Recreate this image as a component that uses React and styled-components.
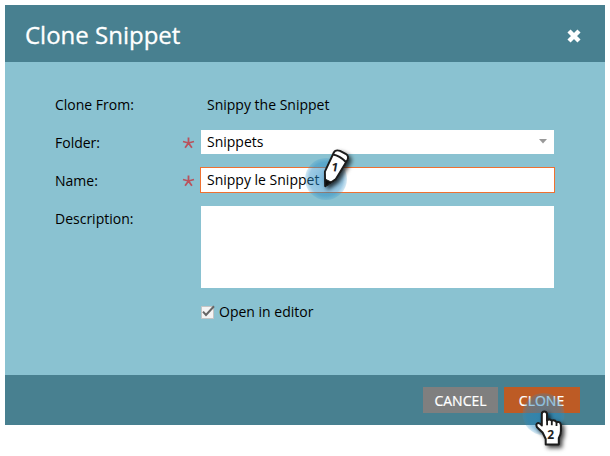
import React from "react";
import styled, { createGlobalStyle } from "styled-components";

const GlobalStyle = createGlobalStyle`
  * { box-sizing: border-box; }
  body { margin: 0; background: #fff; overflow: hidden; }
`;

const Page = styled.div`
  position: relative;
  height: 456px;
  padding: 5px;
  font-family: "Open Sans", "Noto Sans", sans-serif;
  font-size: 14px;
  line-height: 24px;
  color: #000;
`;

const Dialog = styled.section`
  display: flex;
  flex-direction: column;
  width: 600px;
  height: 420px;
  background: #8ac2d1;
`;

const Header = styled.header`
  display: flex;
  align-items: center;
  justify-content: space-between;
  height: 57px;
  padding: 4px 24px 0 20px;
  background: #488090;
`;

const Title = styled.h1`
  margin: -2px 0 0;
  color: #fff;
  font-size: 24px;
  font-weight: 400;
  line-height: 32px;
  -webkit-text-stroke: 0.3px #fff;
`;

const CloseButton = styled.button`
  display: flex;
  padding: 0;
  border: 0;
  background: none;
`;

const Form = styled.div`
  flex: 1;
  display: flex;
  flex-direction: column;
  gap: 14px;
  padding: 30px 51px 0 50px;
`;

const Row = styled.div`
  display: grid;
  grid-template-columns: 126px 20px 353px;
  grid-template-rows: 100%;
  height: ${(p) => (p.$tall ? 82 : 24)}px;
`;

const Label = styled.label`
  padding-top: 1px;
`;

const Required = styled.span`
  padding: 7px 0 0 1px;
  line-height: 0;
`;

const Value = styled.div`
  padding: 1px 6px;
`;

const Select = styled.div`
  display: flex;
  align-items: center;
  justify-content: space-between;
  padding: 0 7px 0 6px;
  background: #fff;

  svg {
    margin-bottom: 2px;
  }
`;

const Input = styled.div`
  padding: 0 6px;
  background: #fff;
  outline: 1px solid #ee7131;
`;

const TextArea = styled.div`
  background: #fff;
`;

const CheckRow = styled.label`
  display: flex;
  align-items: center;
  gap: 4px;
  height: 24px;
  margin: -2px 0 0 146px;
`;

const Footer = styled.footer`
  display: flex;
  justify-content: flex-end;
  gap: 6px;
  height: 50px;
  padding: 12px 25px;
  background: #488090;
`;

const Button = styled.button`
  width: ${(p) => (p.$primary ? 76 : 75)}px;
  height: 26px;
  padding: ${(p) => (p.$primary ? "1px 1px 0 0" : "1px 0 0")};
  border: 0;
  background: ${(p) => (p.$primary ? "#bd5b25" : "#7f7f7f")};
  color: #fff;
  font: 14px/25px "Open Sans", sans-serif;
  -webkit-text-stroke: 0.2px #fff;
`;

const Marker = styled.svg`
  position: absolute;
  left: ${(p) => p.$x}px;
  top: ${(p) => p.$y}px;
  overflow: visible;
`;

const MarkerNumber = styled.text`
  font: 700 12px "Open Sans", sans-serif;
  fill: #222;
  text-anchor: middle;
`;

const Asterisk = () => (
  <Required>
    <svg width="13" height="12" viewBox="0 0 13 12">
      <path
        d="M6.5 6V.6M6.5 6 1 4.5M6.5 6l5.5-1.5M6.5 6 3.1 10.7M6.5 6l3.4 4.7"
        stroke="#b9525c"
        strokeWidth="1.8"
        fill="none"
      />
    </svg>
  </Required>
);

const Defs = ({ id }) => (
  <defs>
    <radialGradient id={`${id}-glow`}>
      <stop offset="0" stopColor="#1f86c2" stopOpacity=".6" />
      <stop offset=".8" stopColor="#2489c4" stopOpacity=".45" />
      <stop offset="1" stopColor="#2f92cb" stopOpacity=".2" />
    </radialGradient>
    <filter id={`${id}-shadow`} x="-40%" y="-40%" width="200%" height="200%">
      <feDropShadow dx="2.5" dy="2.5" stdDeviation="2.2" floodOpacity=".75" />
    </filter>
  </defs>
);

const PencilMarker = () => (
  <Marker $x={304} $y={146} width="50" height="56">
    <Defs id="pencil" />
    <circle cx="22" cy="33" r="21" fill="url(#pencil-glow)" />
    <g filter="url(#pencil-shadow)" stroke="#1b1b1b" strokeLinejoin="round">
      <path
        d="M29.6 7Q31 3.4 36 4.8L41.6 7.8Q45.4 10.4 43.4 14L31.6 33.4 21.2 40.3 20.9 25.6Z"
        fill="#fff"
        strokeWidth="1.9"
      />
      <path d="M21 33 27.6 36.3 21.2 40.3Z" fill="#111" strokeWidth="1" />
      <path d="M29 8.5Q35.5 9.5 42 16" fill="none" strokeWidth="2.2" />
    </g>
    <MarkerNumber x="31" y="25.5" transform="rotate(10 31 21)">1</MarkerNumber>
  </Marker>
);

const HandMarker = () => (
  <Marker $x={522} $y={393} width="50" height="58">
    <Defs id="hand" />
    <circle cx="21.5" cy="21" r="21" fill="url(#hand-glow)" />
    <path
      filter="url(#hand-shadow)"
      d="M20.6 39.5 15 34.2Q13.4 31.2 15.6 30.2 17.4 29.6 19.8 32.4V21Q19.8 18.4 22.3 18.4 24.8 18.4 25 21V27.4Q27.3 25.2 29.7 27.6 32.4 26.2 34.6 29.2 38.2 27.9 38.9 32V38Q38.9 42 36.8 45V51.5H23.7V46Z"
      fill="#fff"
      stroke="#1b1b1b"
      strokeWidth="2"
      strokeLinejoin="round"
    />
    <path d="M25.1 27v5.2M29.8 27.5v4.7M34.5 29.2v3.8" stroke="#1b1b1b" strokeWidth="1.8" />
    <MarkerNumber x="28.8" y="45.7">2</MarkerNumber>
  </Marker>
);

export default function App() {
  return (
    <Page>
      <GlobalStyle />
      <Dialog>
        <Header>
          <Title>Clone Snippet</Title>
          <CloseButton aria-label="Close">
            <svg width="14" height="14" viewBox="0 0 14 14">
              <path d="M2 2l10 10M12 2 2 12" stroke="#fff" strokeWidth="4.4" />
            </svg>
          </CloseButton>
        </Header>
        <Form>
          <Row>
            <Label>Clone From:</Label>
            <span />
            <Value>Snippy the Snippet</Value>
          </Row>
          <Row>
            <Label>Folder:</Label>
            <Asterisk />
            <Select>
              Snippets
              <svg width="8" height="4" viewBox="0 0 8 4" overflow="visible">
                <path d="M0 0h8L4 4.5Z" fill="#999" />
              </svg>
            </Select>
          </Row>
          <Row>
            <Label>Name:</Label>
            <Asterisk />
            <Input>Snippy le Snippet</Input>
          </Row>
          <Row $tall>
            <Label>Description:</Label>
            <span />
            <TextArea />
          </Row>
          <CheckRow>
            <svg width="14" height="14" viewBox="0 0 14 14">
              <path d="M.5 1.5h12v12H.5Z" fill="#f4f4f4" stroke="#c5c5c5" />
              <path d="M2 6.7 5 10 13 1.3" fill="none" stroke="#666" strokeWidth="2" />
            </svg>
            Open in editor
          </CheckRow>
        </Form>
        <Footer>
          <Button>CANCEL</Button>
          <Button $primary>CLONE</Button>
        </Footer>
      </Dialog>
      <PencilMarker />
      <HandMarker />
    </Page>
  );
}
